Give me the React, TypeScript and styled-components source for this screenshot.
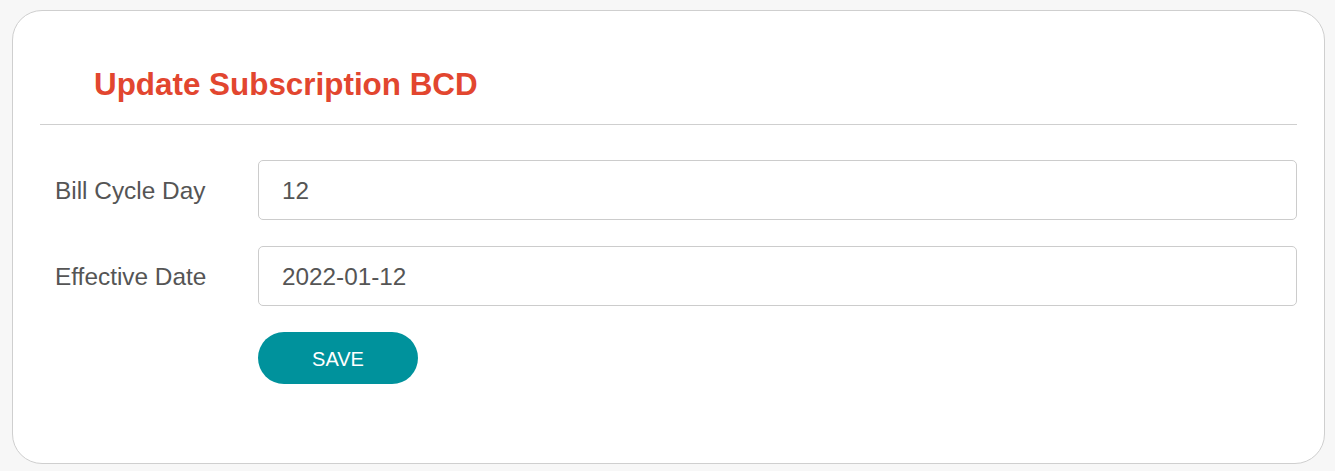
import React from "react";
import styled, { createGlobalStyle } from "styled-components";

const GlobalStyle = createGlobalStyle`
  html, body {
    margin: 0;
    padding: 0;
    background: #f7f7f7;
    font-family: "Liberation Sans", Arial, sans-serif;
  }
  * { box-sizing: border-box; }
`;

const Page = styled.div`
  padding: 10px 10px 7px 12px;
`;

const Card = styled.section`
  background: #ffffff;
  border: 1px solid #cfcfcf;
  border-radius: 30px;
  padding: 0 27px 79px 27px;
`;

const Header = styled.header`
  padding: 56px 0 21px 54px;
  border-bottom: 1px solid #cfcfcf;
`;

const Title = styled.h1`
  margin: 0;
  font-size: 31.4px;
  line-height: 36px;
  font-weight: 700;
  color: #e2462f;
`;

const Form = styled.form`
  display: flex;
  flex-direction: column;
  gap: 26px;
  padding-top: 35px;
`;

const Row = styled.div`
  display: grid;
  grid-template-columns: 218px 1fr;
  align-items: center;
`;

const Label = styled.label`
  padding-left: 15px;
  padding-top: 2px;
  font-size: 24.4px;
  color: #555555;
`;

const Input = styled.input`
  height: 60px;
  width: 100%;
  border: 1px solid #cccccc;
  border-radius: 5px;
  padding: 2px 22px 0 23px;
  font-family: "Liberation Sans", Arial, sans-serif;
  font-size: 24.3px;
  color: #555555;
  background: #ffffff;
  outline: none;
`;

const Button = styled.button`
  width: 160px;
  height: 52px;
  border: none;
  border-radius: 26px;
  background: #00929c;
  color: #ffffff;
  font-family: "Liberation Sans", Arial, sans-serif;
  font-size: 20px;
  padding: 3px 0 0 0;
  cursor: pointer;
  grid-column: 2;
  justify-self: start;
`;

export default function App() {
  return (
    <>
      <GlobalStyle />
      <Page>
        <Card>
          <Header>
            <Title>Update Subscription BCD</Title>
          </Header>
          <Form onSubmit={(e) => e.preventDefault()}>
            <Row>
              <Label htmlFor="bcd">Bill Cycle Day</Label>
              <Input id="bcd" defaultValue="12" />
            </Row>
            <Row>
              <Label htmlFor="eff">Effective Date</Label>
              <Input id="eff" defaultValue="2022-01-12" />
            </Row>
            <Row>
              <Button type="submit">SAVE</Button>
            </Row>
          </Form>
        </Card>
      </Page>
    </>
  );
}
